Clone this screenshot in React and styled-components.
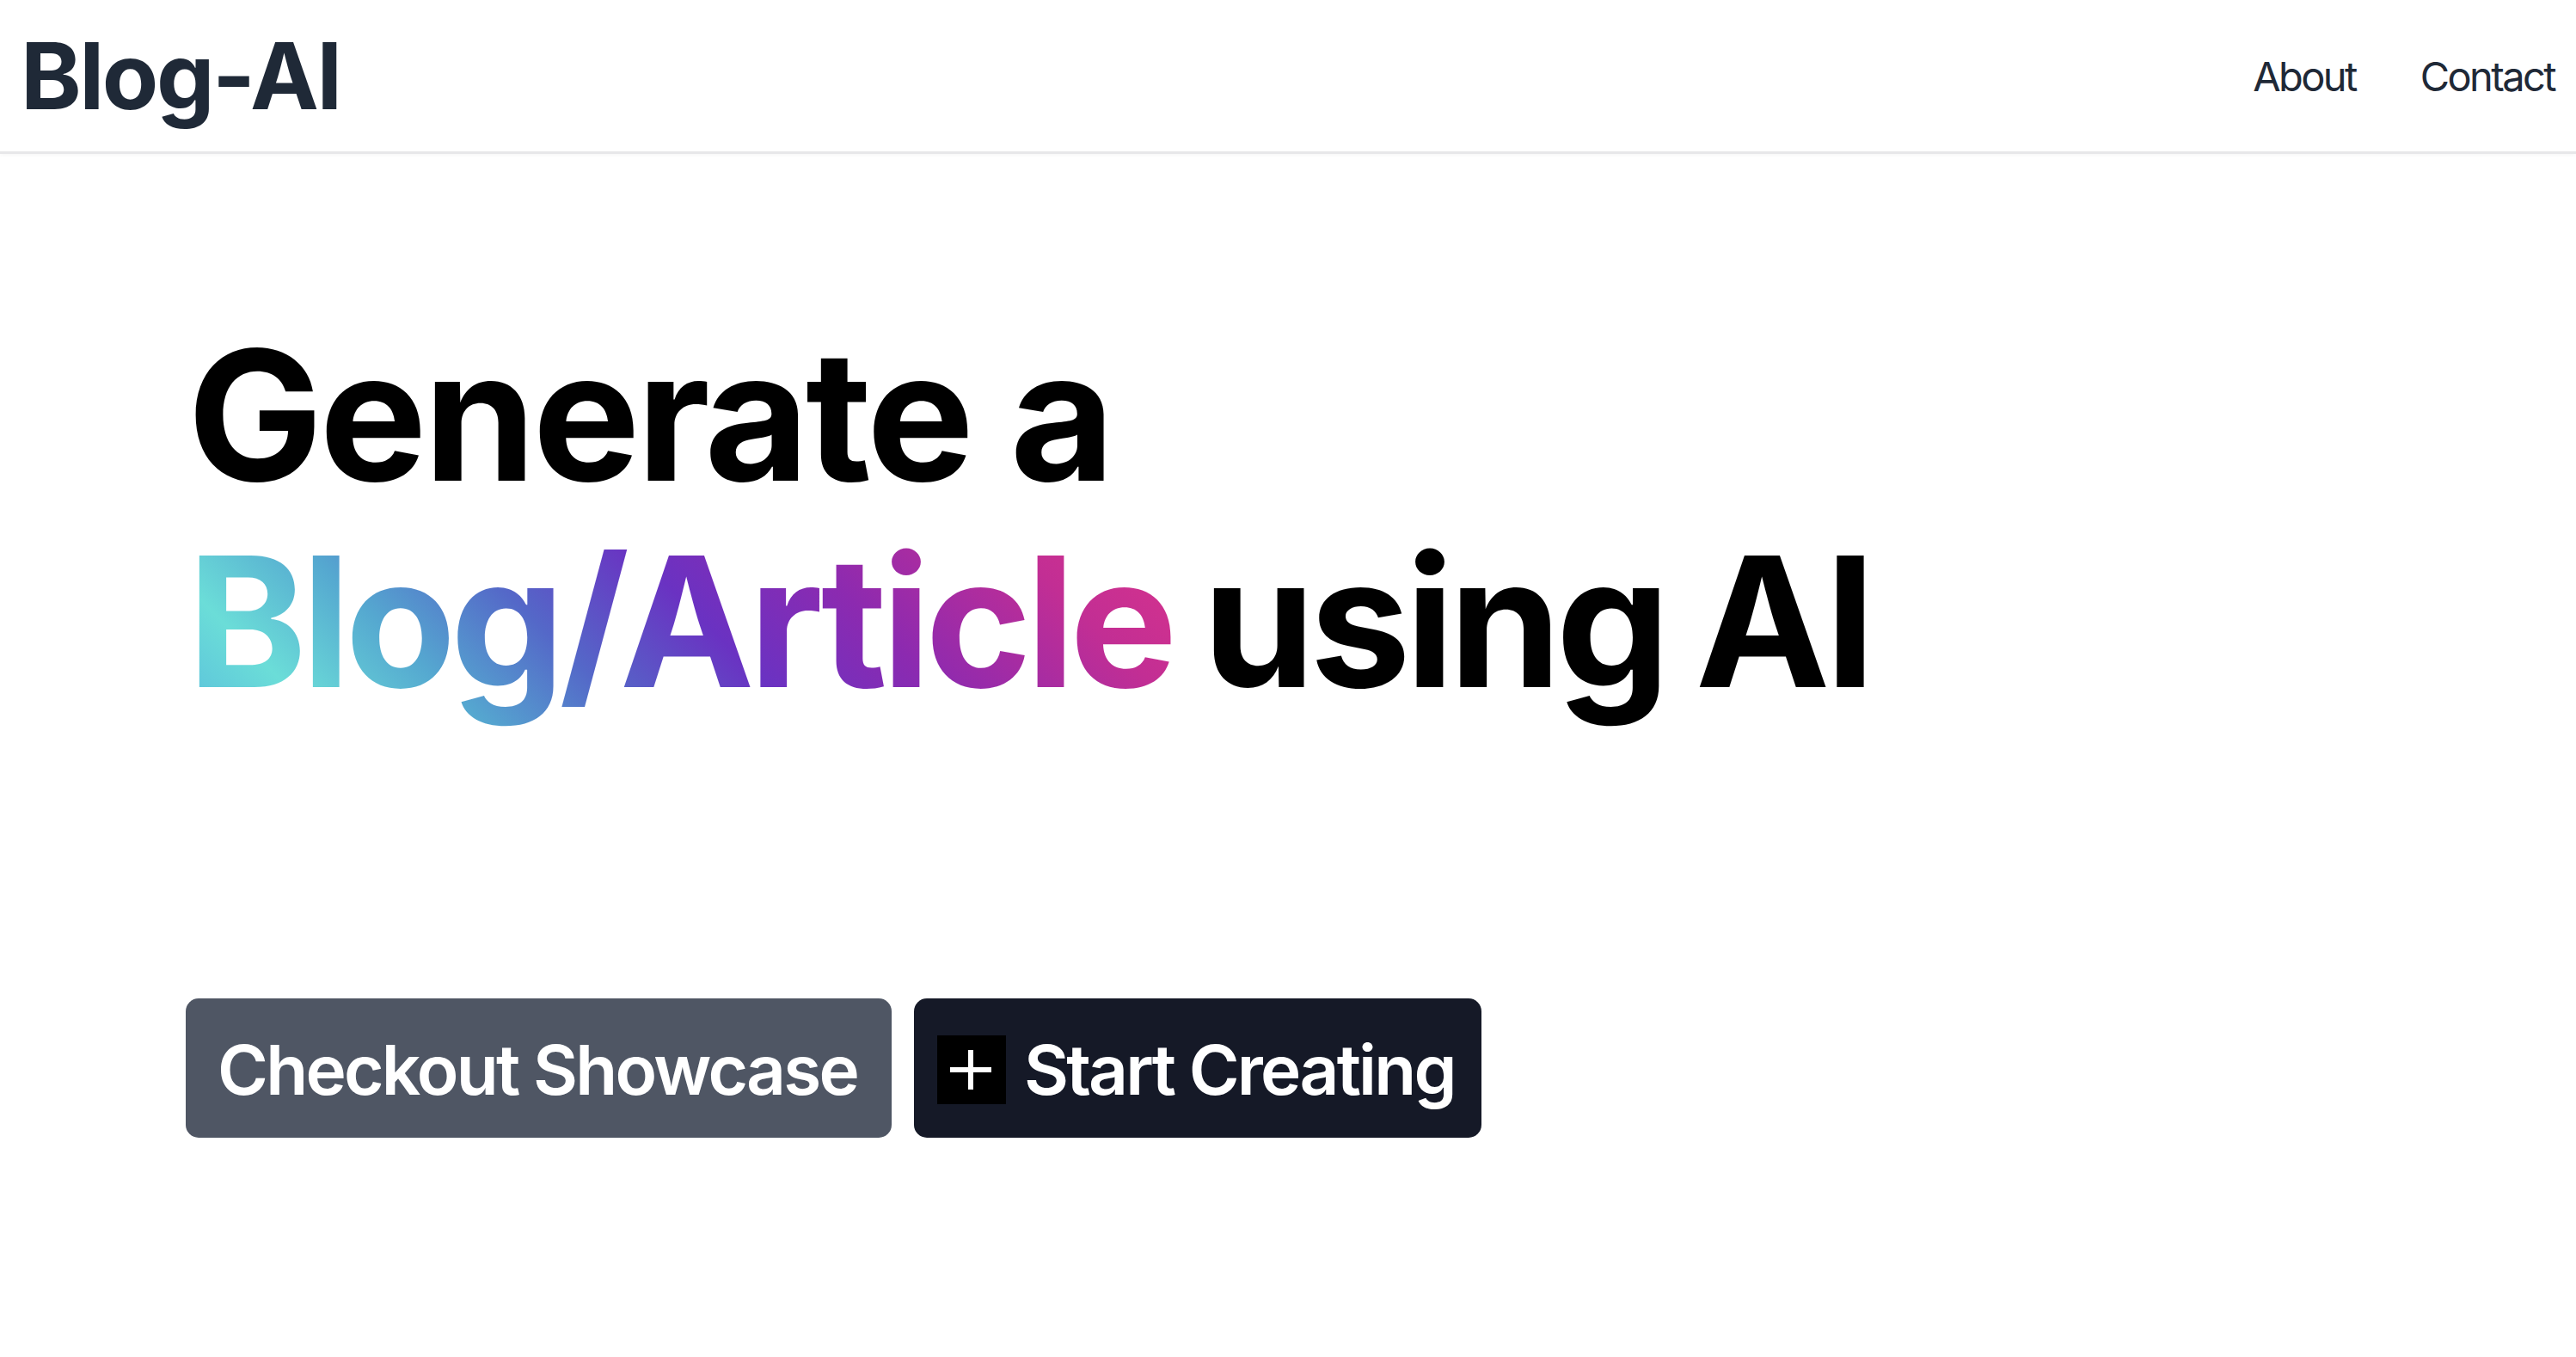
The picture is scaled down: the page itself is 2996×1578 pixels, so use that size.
import React from 'react';
import styled, { createGlobalStyle } from 'styled-components';

const GlobalStyle = createGlobalStyle`
  body {
    margin: 0;
    background: #ffffff;
    font-family: Inter, "Noto Sans", "Liberation Sans", sans-serif;
  }
`;

const Header = styled.header`
  display: flex;
  justify-content: space-between;
  align-items: center;
  height: 176px;
  padding: 0 25px 0 24px;
  border-bottom: 3px solid #e7e7e9;
  box-shadow: 0 2px 4px rgba(0, 0, 0, 0.03);
`;

const Logo = styled.div`
  font-size: 107px;
  font-weight: 700;
  line-height: 1;
  color: #1f2937;
  letter-spacing: -2.5px;
`;

const Nav = styled.nav`
  display: flex;
  gap: 75px;
`;

const NavLink = styled.a`
  font-size: 47px;
  color: #1f2937;
  text-decoration: none;
  letter-spacing: -2.6px;
`;

const Hero = styled.main`
  padding: 184px 0 0 218px;
`;

const Title = styled.h1`
  margin: 0;
  font-size: 210px;
  line-height: 240px;
  font-weight: 700;
  color: #000000;
  letter-spacing: -4px;
`;

const TitleLine = styled.span`
  letter-spacing: ${(p) => p.$tracking || '-4px'};
  word-spacing: ${(p) => p.$wordGap || '0px'};
`;

const Gradient = styled.span`
  background: linear-gradient(
    45deg,
    #58bcdc 0%,
    #6bddd8 12%,
    #55a8d0 25%,
    #5468c8 38%,
    #6a32c2 52%,
    #8c2ab0 66%,
    #c22e94 84%,
    #dc348a 100%
  );
  -webkit-background-clip: text;
  background-clip: text;
  color: transparent;
`;

const Actions = styled.div`
  display: flex;
  gap: 26px;
  margin-top: 318px;
  margin-left: -2px;
`;

const Button = styled.button`
  display: inline-flex;
  align-items: center;
  gap: 21px;
  height: 162px;
  padding: 4px ${(p) => p.$right}px 0 ${(p) => p.$left}px;
  border: none;
  border-radius: 15px;
  background: ${(p) => p.$bg};
  color: #ffffff;
  font-family: inherit;
  font-size: 80px;
  font-weight: 600;
  line-height: 1.2;
  letter-spacing: -2.75px;
  cursor: pointer;
`;

const IconBox = styled.span`
  display: inline-flex;
  width: 80px;
  height: 80px;
  background: #000000;
`;

const PlusIcon = () => (
  <svg width="80" height="80" viewBox="0 0 80 80" fill="none">
    <path d="M15 40h48M39 17v46" stroke="#ffffff" strokeWidth="6" />
  </svg>
);

export default function App() {
  return (
    <>
      <GlobalStyle />
      <Header>
        <Logo>Blog-AI</Logo>
        <Nav>
          <NavLink href="#">About</NavLink>
          <NavLink href="#">Contact</NavLink>
        </Nav>
      </Header>
      <Hero>
        <Title>
          <TitleLine>Generate a</TitleLine>
          <br />
          <TitleLine $tracking="-6.2px" $wordGap="-8px">
            <Gradient>Blog/Article</Gradient> using AI
          </TitleLine>
        </Title>
        <Actions>
          <Button $bg="#4f5664" $left={37} $right={40}>
            Checkout Showcase
          </Button>
          <Button $bg="#151927" $left={27} $right={31}>
            <IconBox>
              <PlusIcon />
            </IconBox>
            Start Creating
          </Button>
        </Actions>
      </Hero>
    </>
  );
}
